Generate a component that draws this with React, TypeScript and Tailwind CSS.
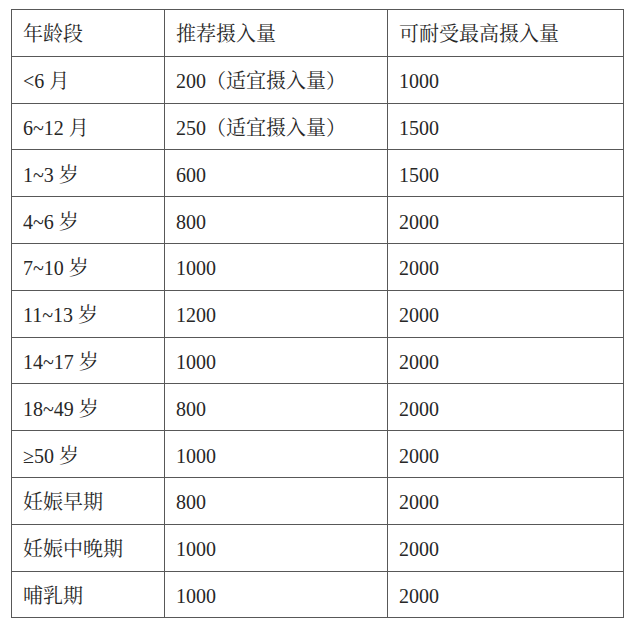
import React from "react";

const rows: [string, string, string][] = [
  ["<6 月", "200（适宜摄入量）", "1000"],
  ["6~12 月", "250（适宜摄入量）", "1500"],
  ["1~3 岁", "600", "1500"],
  ["4~6 岁", "800", "2000"],
  ["7~10 岁", "1000", "2000"],
  ["11~13 岁", "1200", "2000"],
  ["14~17 岁", "1000", "2000"],
  ["18~49 岁", "800", "2000"],
  ["≥50 岁", "1000", "2000"],
  ["妊娠早期", "800", "2000"],
  ["妊娠中晚期", "1000", "2000"],
  ["哺乳期", "1000", "2000"],
];

const cell = "border-[1.5px] border-[#585858] px-[11px] pt-[3px] text-left align-middle font-normal";

export default function App() {
  return (
    <div
      className="w-[633px] h-[625px] bg-white pt-[9px] pl-[11px] text-[#272727] text-[20px]"
      style={{ fontFamily: '"Liberation Serif", "Noto Serif CJK SC", "Noto Sans CJK SC", serif' }}
    >
      <table className="w-[612px] border-collapse table-fixed">
        <colgroup>
          <col className="w-[153px]" />
          <col className="w-[223px]" />
          <col className="w-[236px]" />
        </colgroup>
        <thead>
          <tr className="h-[46.8px]">
            <th className={cell}>年龄段</th>
            <th className={cell}>推荐摄入量</th>
            <th className={cell}>可耐受最高摄入量</th>
          </tr>
        </thead>
        <tbody>
          {rows.map((r, i) => (
            <tr key={i} className="h-[46.8px]">
              <td className={cell}>{r[0]}</td>
              <td className={cell}>{r[1]}</td>
              <td className={cell}>{r[2]}</td>
            </tr>
          ))}
        </tbody>
      </table>
    </div>
  );
}
